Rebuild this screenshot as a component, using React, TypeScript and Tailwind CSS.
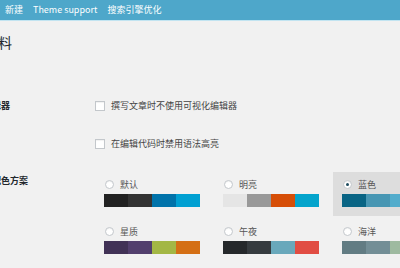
const schemes = [
  { name: '默认', colors: ['#222222', '#333333', '#0073aa', '#00a0d2'] },
  { name: '明亮', colors: ['#e5e5e5', '#999999', '#d64e07', '#04a4cc'] },
  { name: '蓝色', colors: ['#096484', '#4796b3', '#52accc', '#74b6ce'], checked: true },
  { name: '星质', colors: ['#413256', '#523f6d', '#a3b745', '#d46f15'] },
  { name: '午夜', colors: ['#25282b', '#363b3f', '#69a8bb', '#e14d43'] },
  { name: '海洋', colors: ['#627c83', '#738e96', '#9ebaa0', '#aa9d88'] },
];

function Checkbox({ label }: { label: string }) {
  return (
    <div className="flex items-center gap-[6px]">
      <span className="w-[10px] h-[10px] border border-[#c3c7cb] bg-white shadow-[inset_0_1px_1px_rgba(0,0,0,0.06)]" />
      <span className="text-[9px] leading-[10px] text-[#444]">{label}</span>
    </div>
  );
}

function SchemeOption({ name, colors, checked }: { name: string; colors: string[]; checked?: boolean }) {
  return (
    <div className={`w-[114px] px-[9px] pt-[8px] pb-[9px] ${checked ? 'bg-[#dddddd]' : ''}`}>
      <div className="flex items-center gap-[6px] ml-[1px] h-[9px] mb-[5px]">
        <span className="w-[9px] h-[9px] rounded-full border border-[#c3c7cb] bg-white flex items-center justify-center shadow-[inset_0_1px_1px_rgba(0,0,0,0.06)]">
          {checked && <span className="w-[3px] h-[3px] rounded-full bg-[#1f4b5e]" />}
        </span>
        <span className="text-[9px] leading-[9px] text-[#555]">{name}</span>
      </div>
      <div className="flex h-[13px] w-[96px]">
        {colors.map((c) => (
          <span key={c} className="flex-1" style={{ backgroundColor: c }} />
        ))}
      </div>
    </div>
  );
}

export default function App() {
  return (
    <div className="w-[400px] h-[268px] overflow-hidden bg-[#f1f1f1] font-['Noto_Sans_CJK_SC','Noto_Sans',sans-serif]">
      {/* admin bar */}
      <div className="h-[21px] bg-[#4ea7ca] border-b border-[#c2e4f1] flex items-center gap-[10px] pl-[5px] text-[9px] text-white">
        <span>新建</span>
        <span>Theme support</span>
        <span>搜索引擎优化</span>
      </div>

      <div className="ml-[-44px]">
        <h1 className="mt-[14px] text-[14px] leading-[14px] text-[#23282d]">个人资料</h1>

        <div className="flex items-center mt-[52px]">
          <div className="w-[139px] text-[9px] leading-[10px] font-bold text-[#23282d] whitespace-nowrap">可视化编辑器</div>
          <Checkbox label="撰写文章时不使用可视化编辑器" />
        </div>

        <div className="flex items-center mt-[28px]">
          <div className="w-[139px]" />
          <Checkbox label="在编辑代码时禁用语法高亮" />
        </div>

        <div className="flex mt-[23px]">
          <div className="w-[139px] shrink-0 pt-[4px] text-[9px] leading-[10px] font-bold text-[#23282d] whitespace-nowrap">管理界面配色方案</div>
          <div className="grid grid-cols-[114px_114px_114px] gap-x-[5px] gap-y-[3px]">
            {schemes.map((s) => (
              <SchemeOption key={s.name} {...s} />
            ))}
          </div>
        </div>
      </div>
    </div>
  );
}
